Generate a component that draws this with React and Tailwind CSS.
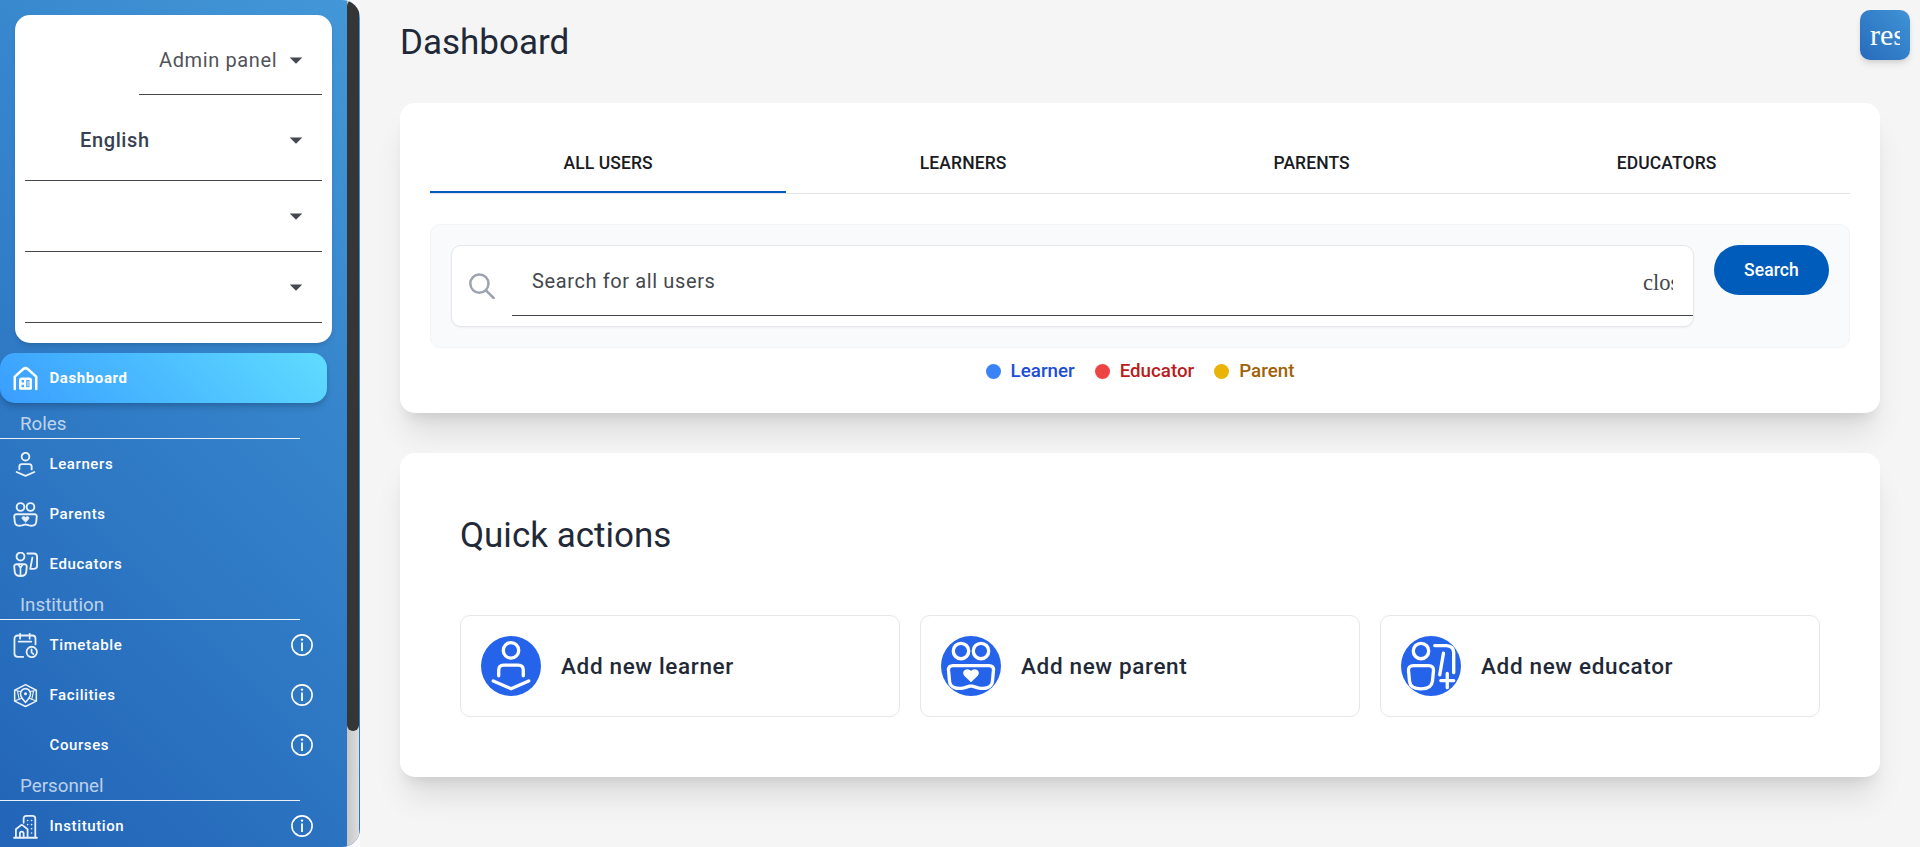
import React from "react";

const Svg = ({ className = "size-[25px] opacity-90", strokeWidth = "1.8", children }) => (
  <svg
    viewBox="0 0 24 24"
    className={className}
    fill="none"
    stroke="currentColor"
    strokeWidth={strokeWidth}
    strokeLinecap="round"
    strokeLinejoin="round"
  >
    {children}
  </svg>
);

const HomeIcon = () => (
  <Svg className="size-[25px]">
    <path d="M1.7 22V10.2L9.9 2.9Q12 1.2 14.1 2.9L22.3 10.2V22" strokeWidth="2.4" />
    <path d="M7 21.6V13.6Q7 12.2 8.4 12.2H15.6Q17 12.2 17 13.6V21.6Z" strokeWidth="2.4" />
    <path d="M11.6 12.5V21.5M8 17H11.5" strokeWidth="2.2" />
    <path d="M14.4 14.8V19" strokeWidth=".8" />
  </Svg>
);

const LearnerIcon = ({ className, strokeWidth }) => (
  <Svg className={className} strokeWidth={strokeWidth}>
    <circle cx="12" cy="4.5" r="3.7" />
    <path d="M6.1 16.7V14Q6.1 11.6 8.5 11.6H15.5Q17.9 11.6 17.9 14V16.7" />
    <path d="M3.5 19.2L12 22.9L20.5 19.2" />
  </Svg>
);

const ParentIcon = ({ className, strokeWidth }) => (
  <Svg className={className} strokeWidth={strokeWidth}>
    <circle cx="7.2" cy="4.8" r="3.7" />
    <circle cx="16.8" cy="4.8" r="3.7" />
    <path d="M3.4 11.8H20.6Q22.9 11.8 22.8 14L22.3 19.2C22.1 22.6 18.5 23.2 15.4 22.5L12.6 21.7Q12 21.6 11.4 21.7L8.6 22.5C5.5 23.2 1.9 22.6 1.7 19.2L1.2 14Q1.1 11.8 3.4 11.8Z" />
    <path d="M12 19.3L9 16.4C7.6 14.7 10 12.9 12 14.8C14 12.9 16.4 14.7 15 16.4Z" fill="currentColor" strokeWidth=".7" />
  </Svg>
);

const EducatorIcon = () => (
  <Svg>
    <circle cx="7.2" cy="4.4" r="3.8" />
    <path d="M3.6 11.8H10.8Q13.3 11.8 13.2 14.2L12.7 19.3Q12.3 23 7.2 23Q2.1 23 1.7 19.3L1.2 14.2Q1.1 11.8 3.6 11.8Z" />
    <path d="M5 12L7.2 15.2L9.4 12M7.2 15.2V22.6" strokeWidth="1.6" />
    <path d="M13.8 1.4H19.8Q23.1 1.4 23.1 4.6V13.4Q23 16.2 19.8 16.2H16.6L18.6 5.4" />
  </Svg>
);

const AddEducatorIcon = ({ className, strokeWidth }) => (
  <Svg className={className} strokeWidth={strokeWidth}>
    <circle cx="7.2" cy="4.8" r="3.7" />
    <path d="M3.6 11.8H10.8Q13.3 11.8 13.2 14.2L12.7 19.3Q12.3 23 7.2 23Q2.1 23 1.7 19.3L1.2 14.2Q1.1 11.8 3.6 11.8Z" />
    <path d="M13.8 2.2H19.4Q22.8 2.3 22.9 5.6V15.2" />
    <path d="M18 5.8L16.2 16.2" />
    <path d="M19.8 15.6V22.4M16.7 19H22.9" />
  </Svg>
);

const TimetableIcon = () => (
  <Svg strokeWidth="1.7">
    <path d="M9.8 23H4.6Q1.4 23 1.4 19.8V5.4Q1.4 2.4 4.6 2.4H18.6Q21.6 2.4 21.6 5.4V11" />
    <path d="M6.8 .8V5.4M16 .8V5.4M5.4 8.2H17.6" />
    <circle cx="18" cy="18.2" r="5" />
    <path d="M17.8 15.8V18.6L19.6 20.2" />
  </Svg>
);

const FacilitiesIcon = () => (
  <Svg strokeWidth="1.5">
    <path d="M12 1.6L22.4 7V17.4L12 22.6L1.6 17.4V7Z" />
    <path d="M12 18.6C9.2 15.8 7.2 13.4 7.2 10.4C7.2 7.6 9.4 5.4 12 5.4C14.6 5.4 16.8 7.6 16.8 10.4C16.8 13.4 14.8 15.8 12 18.6Z" />
    <path d="M2.2 7.2L7.4 8.2M21.8 7.2L16.6 8.2M2 17L8.6 14.6M22 17L15.4 14.6M4.4 8.2L6 15.8M19.6 8.2L18 15.8" strokeWidth="1.1" />
    <circle cx="12" cy="10.4" r=".7" fill="currentColor" />
  </Svg>
);

const InstitutionIcon = () => (
  <Svg strokeWidth="1.7">
    <path d="M1 22.8H23M2.8 22.6V14.6L7.4 10.9Q8.4 10.2 9.4 10.9L14 14.6V22.6" />
    <path d="M6.6 22.4V18.8Q6.6 17 8.4 17Q10.2 17 10.2 18.8V22.4" />
    <path d="M10.2 8.4V4.4Q10.2 1.8 12.8 1.8H18.8Q21.4 1.8 21.4 4.4V22.6" />
    <path d="M14 6.2H14.1M17.8 6.2H17.9M14 10.2H14.1M17.8 10.2H17.9M17.8 14.2H17.9M17.8 18.2H17.9" strokeWidth="1.5" />
  </Svg>
);

const InfoIcon = () => (
  <svg viewBox="0 0 22 22" className="size-[22px]" fill="none" stroke="currentColor" strokeWidth="1.6">
    <circle cx="11" cy="11" r="10.1" />
    <path d="M11 8.6V17" strokeWidth="1.8" />
    <circle cx="11" cy="5.6" r="1.2" fill="currentColor" stroke="none" />
  </svg>
);

const Caret = () => (
  <svg viewBox="0 0 24 24" className="size-[30px] text-[#44474e]" fill="currentColor">
    <path d="M7 10l5 5 5-5z" />
  </svg>
);

const NavItem = ({ icon, label, info, active }) => (
  <div
    className={
      active
        ? "mb-[5px] flex h-[50px] w-[327px] shrink-0 items-center rounded-[15px] bg-linear-45 from-[#3a9dff] to-[#60dcff] pl-[12.5px] shadow-[0_5px_7.5px_-1.25px_rgba(0,0,0,0.15),0_2.5px_5px_-2.5px_rgba(0,0,0,0.15)]"
        : "flex h-[50px] w-[327px] shrink-0 items-center pl-[12.5px]"
    }
  >
    <span className="flex size-[25px] items-center">{icon}</span>
    <span
      className={
        active
          ? "ml-[12px] text-[15px] font-bold tracking-[0.6px]"
          : "ml-[12px] text-[15px] font-medium tracking-[0.6px]"
      }
    >
      {label}
    </span>
    {info && (
      <span className="mr-[14px] ml-auto">
        <InfoIcon />
      </span>
    )}
  </div>
);

const NavHeading = ({ children }) => (
  <div className="flex h-[31px] w-[300px] shrink-0 items-center border-b border-white/90 pt-[2px] pl-5 text-[18.75px] leading-[28px] text-white/70">
    {children}
  </div>
);

const Select = ({ className, children }) => (
  <div className={"flex items-center justify-between border-b border-[#44474e] pr-[11px] " + className}>
    <span>{children}</span>
    <Caret />
  </div>
);

const Dot = ({ color, text, label }) => (
  <div className={"flex items-center gap-[10px] text-[18.75px] font-medium " + text}>
    <span className={"size-[15px] rounded-full " + color} />
    {label}
  </div>
);

const Action = ({ icon, label }) => (
  <div className="flex h-[102px] flex-1 items-center gap-5 rounded-[10px] border border-[#e5e7eb] px-5">
    <span className="flex size-[60px] items-center justify-center overflow-hidden rounded-full bg-[#2563eb] text-white">
      {icon}
    </span>
    <span className="pt-[2px] text-[22.5px] font-medium tracking-[0.65px] text-[#1f2937]">{label}</span>
  </div>
);

export default function App() {
  return (
    <div className="flex h-[847px] w-full overflow-hidden bg-[#faf9fd] font-[Roboto,sans-serif]">
      <aside className="flex w-[360px] shrink-0 overflow-hidden rounded-r-[18px] bg-linear-45 from-[#2264b7] to-[#4398d8] pr-px text-white">
        <div className="flex w-[347px] flex-col">
          <div className="mt-[15px] mb-[10px] ml-[15px] flex h-[328px] w-[317px] shrink-0 flex-col rounded-[15px] bg-white px-[10px] text-[20px] tracking-[0.62px] shadow-md">
            <Select className="mt-[11px] ml-[114px] h-[69px] pl-5 text-[#50535a]">Admin panel</Select>
            <Select className="h-[86px] pt-[4px] pl-[55px] font-medium text-[#374151]">English</Select>
            <Select className="h-[71px]" />
            <Select className="h-[71px]" />
          </div>
          <NavItem active icon={<HomeIcon />} label="Dashboard" />
          <NavHeading>Roles</NavHeading>
          <NavItem icon={<LearnerIcon />} label="Learners" />
          <NavItem icon={<ParentIcon />} label="Parents" />
          <NavItem icon={<EducatorIcon />} label="Educators" />
          <NavHeading>Institution</NavHeading>
          <NavItem info icon={<TimetableIcon />} label="Timetable" />
          <NavItem info icon={<FacilitiesIcon />} label="Facilities" />
          <NavItem info label="Courses" />
          <NavHeading>Personnel</NavHeading>
          <NavItem info icon={<InstitutionIcon />} label="Institution" />
        </div>
        <div className="w-3 bg-linear-to-r from-[#c6c6c6] to-[#dedede]">
          <div className="h-[731px] rounded-[6px] bg-[#363636]" />
        </div>
      </aside>

      <main className="flex-1 bg-[#f5f5f5] pl-10">
        <header className="flex h-[103px] justify-between pt-[10px] pr-[10px]">
          <h1 className="mt-[9px] text-[35px] leading-[48px] text-[#1f2937]">Dashboard</h1>
          <div className="h-[50px] w-[50px] rounded-[10px] bg-linear-45 from-[#286bbc] to-[#4093d5] px-[10px] shadow-[0_5px_7.5px_-1.25px_rgba(0,0,0,0.1),0_2.5px_5px_-2.5px_rgba(0,0,0,0.1)]">
            <div className="overflow-hidden font-['Liberation_Serif',serif] text-[30px] leading-[50px] text-white">
              rest
            </div>
          </div>
        </header>

        <section className="mr-10 h-[310px] rounded-[15px] bg-white px-[30px] pt-[30px] shadow-[0_25px_31px_-6px_rgba(0,0,0,0.1),0_10px_12.5px_-7.5px_rgba(0,0,0,0.1)]">
          <div className="flex h-[61px] border-b border-[#e0e2ec] text-[17.5px] font-medium tracking-[0.1px] text-[#1a1b1f]">
            <div className="flex flex-auto items-center justify-center border-b-2 border-[#005cbb]">
              <span className="pt-[2px]">ALL USERS</span>
            </div>
            <div className="flex flex-auto items-center justify-center">LEARNERS</div>
            <div className="flex flex-auto items-center justify-center">PARENTS</div>
            <div className="flex flex-auto items-center justify-center">EDUCATORS</div>
          </div>
          <div className="mt-[30px] flex h-[124px] items-start gap-5 rounded-[10px] border border-[#f3f4f6] bg-[#f9fafb] p-5">
            <div className="flex h-[82px] flex-1 rounded-[10px] border border-[#e5e7eb] bg-white shadow-[0_1px_2px_rgba(0,0,0,0.05)]">
              <svg viewBox="0 0 26 26" className="mt-[27px] ml-[17px] size-[26px] text-[#9ca3af]" fill="none" stroke="currentColor" strokeWidth="2.5" strokeLinecap="round">
                <circle cx="10.4" cy="10.6" r="9.1" />
                <path d="M17 17.4L24.6 25" />
              </svg>
              <div className="ml-[17px] flex h-[70px] flex-1 items-center justify-between border-b border-[#44474e] pr-5 pl-5 text-[#44474e]">
                <span className="text-[20px] tracking-[0.62px]">Search for all users</span>
                <span className="w-[30px] overflow-hidden pt-[5px] font-['Liberation_Serif',serif] text-[22.5px]">close</span>
              </div>
            </div>
            <div className="flex h-[50px] w-[115px] items-center justify-center rounded-full bg-[#005cbb] text-[17.5px] font-medium tracking-[0.1px] text-white">
              Search
            </div>
          </div>
          <div className="mt-[10px] flex h-[26px] items-center justify-center gap-5">
            <Dot color="bg-[#3b82f6]" text="text-[#1d4ed8]" label="Learner" />
            <Dot color="bg-[#ef4444]" text="text-[#b91c1c]" label="Educator" />
            <Dot color="bg-[#eab308]" text="text-[#a16207]" label="Parent" />
          </div>
        </section>

        <section className="mt-10 mr-10 h-[324px] rounded-[15px] bg-white px-[60px] pt-[59px] shadow-[0_25px_31px_-6px_rgba(0,0,0,0.1),0_10px_12.5px_-7.5px_rgba(0,0,0,0.1)]">
          <h2 className="text-[35px] leading-[48px] text-[#1f2937]">Quick actions</h2>
          <div className="mt-[55px] flex gap-5">
            <Action icon={<LearnerIcon className="size-[50px]" strokeWidth="1.6" />} label="Add new learner" />
            <Action icon={<ParentIcon className="size-[50px]" strokeWidth="1.6" />} label="Add new parent" />
            <Action icon={<AddEducatorIcon className="size-[50px]" strokeWidth="1.6" />} label="Add new educator" />
          </div>
        </section>
      </main>
    </div>
  );
}
